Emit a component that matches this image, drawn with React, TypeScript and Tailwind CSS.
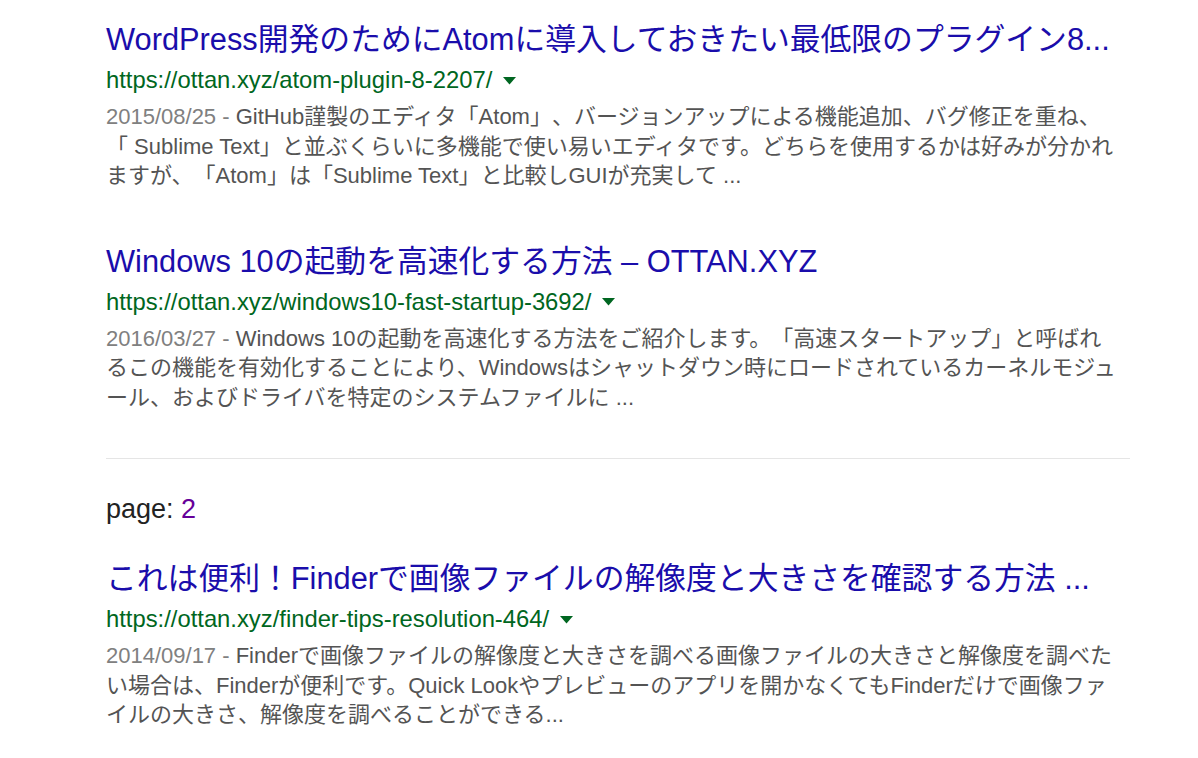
import React from 'react';

type Result = {
  title: string;
  url: string;
  date: string;
  lines: string[];
};

const page1: Result[] = [
  {
    title: 'WordPress開発のためにAtomに導入しておきたい最低限のプラグイン8...',
    url: 'https://ottan.xyz/atom-plugin-8-2207/',
    date: '2015/08/25',
    lines: [
      'GitHub謹製のエディタ「Atom」、バージョンアップによる機能追加、バグ修正を重ね、',
      '「 Sublime Text」と並ぶくらいに多機能で使い易いエディタです。どちらを使用するかは好みが分かれ',
      'ますが、「Atom」は「Sublime Text」と比較しGUIが充実して ...',
    ],
  },
  {
    title: 'Windows 10の起動を高速化する方法 – OTTAN.XYZ',
    url: 'https://ottan.xyz/windows10-fast-startup-3692/',
    date: '2016/03/27',
    lines: [
      'Windows 10の起動を高速化する方法をご紹介します。「高速スタートアップ」と呼ばれ',
      'るこの機能を有効化することにより、Windowsはシャットダウン時にロードされているカーネルモジュ',
      'ール、およびドライバを特定のシステムファイルに ...',
    ],
  },
];

const page2: Result[] = [
  {
    title: 'これは便利！Finderで画像ファイルの解像度と大きさを確認する方法 ...',
    url: 'https://ottan.xyz/finder-tips-resolution-464/',
    date: '2014/09/17',
    lines: [
      'Finderで画像ファイルの解像度と大きさを調べる画像ファイルの大きさと解像度を調べた',
      'い場合は、Finderが便利です。Quick Lookやプレビューのアプリを開かなくてもFinderだけで画像ファ',
      'イルの大きさ、解像度を調べることができる...',
    ],
  },
];

function ResultItem({ r }: { r: Result }) {
  return (
    <div className="mb-[51px]">
      <a className="block whitespace-nowrap text-[30.8px] leading-[40px] text-[#1a0dab]">
        {r.title}
      </a>
      <div className="mt-[3px] flex items-center gap-[11px] text-[23.8px] leading-[34px] text-[#006621]">
        <span>{r.url}</span>
        <svg width="13" height="8" viewBox="0 0 13 8" className="mt-[1px]">
          <path d="M0 0 L13 0 L6.5 7.5 Z" fill="#006621" />
        </svg>
      </div>
      <div className="mt-[5px] text-[22px] leading-[29.5px] text-[#545454]">
        {r.lines.map((line, i) => (
          <div key={i} className="whitespace-nowrap">
            {i === 0 && <span className="text-[#808080]">{r.date} - </span>}
            {line}
          </div>
        ))}
      </div>
    </div>
  );
}

export default function App() {
  return (
    <main
      className="min-h-[758px] bg-white pl-[106px] pt-[20px] [text-spacing-trim:space-all]"
      style={{ fontFamily: '"Liberation Sans", Arial, "Noto Sans CJK JP", sans-serif' }}
    >
      <div className="w-[1024px]">
        {page1.map((r) => (
          <ResultItem key={r.url} r={r} />
        ))}
        <div className="-mt-[5px] border-t border-[#e5e5e5]" />
        <div className="mt-[30px] text-[27px] leading-[40px] text-[#222]">
          page: <span className="text-[#660099]">2</span>
        </div>
        <div className="mt-[30px]">
          {page2.map((r) => (
            <ResultItem key={r.url} r={r} />
          ))}
        </div>
      </div>
    </main>
  );
}
